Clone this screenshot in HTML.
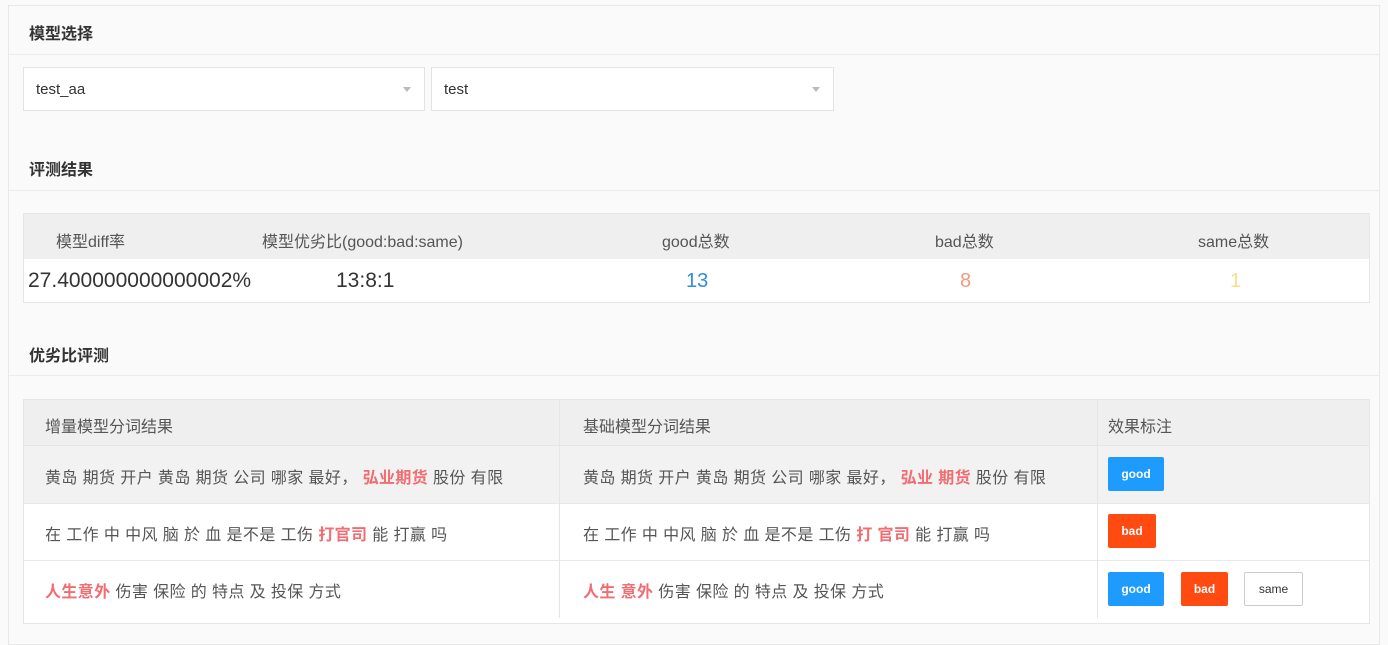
<!DOCTYPE html>
<html><head><meta charset="utf-8"><style>
*{margin:0;padding:0;box-sizing:border-box}
body{width:1388px;height:618px;background:#fafafa;font-family:"Liberation Sans","Noto Sans CJK SC",sans-serif;color:#333;position:relative;overflow:hidden}
.a{position:absolute;white-space:nowrap}
.panel{left:8px;top:5px;width:1372px;height:640px;border:1px solid #e8e8e8;background:#fafafa}
.h{font-size:16px;font-weight:bold;color:#333;left:29px}
.sep{left:9px;width:1370px;height:1px;background:#ececec}
.sel{height:44px;border:1px solid #e3e3e3;background:#fff;font-size:15px;color:#333;padding:13px 12px}
.arr{position:absolute;right:13px;top:19px;width:0;height:0;border-left:4px solid transparent;border-right:4px solid transparent;border-top:5px solid #bbb}
.t{font-size:16px;color:#555}
.rw{letter-spacing:0.4px}
.r{color:#f26d72;font-weight:bold}
.badge{height:34px;color:#fff;font-size:12px;font-weight:bold;text-align:center;line-height:34px;border-radius:2px}
</style></head><body>
<div class="a panel"></div>
<div class="a h" style="top:20px">模型选择</div>
<div class="a sep" style="top:54px"></div>
<div class="a sel" style="left:23px;top:67px;width:402px">test_aa<span class="arr"></span></div>
<div class="a sel" style="left:431px;top:67px;width:403px">test<span class="arr"></span></div>
<div class="a h" style="top:156px">评测结果</div>
<div class="a sep" style="top:190px"></div>

<div class="a" style="left:23px;top:213px;width:1347px;height:90px;border:1px solid #e6e6e6;background:#fff"></div>
<div class="a" style="left:24px;top:214px;width:1345px;height:45px;background:#efefef"></div>
<div class="a t" style="left:56px;top:228px">模型diff率</div>
<div class="a t" style="left:262px;top:228px">模型优劣比(good:bad:same)</div>
<div class="a t" style="left:662px;top:228px">good总数</div>
<div class="a t" style="left:935px;top:228px">bad总数</div>
<div class="a t" style="left:1198px;top:228px">same总数</div>
<div class="a" style="left:28px;top:269px;font-size:21px;color:#333">27.400000000000002%</div>
<div class="a" style="left:336px;top:269px;font-size:21px;color:#333">13:8:1</div>
<div class="a" style="left:686px;top:270px;font-size:20px;color:#2b8ee0">13</div>
<div class="a" style="left:960px;top:270px;font-size:20px;color:#f59a7a">8</div>
<div class="a" style="left:1230px;top:270px;font-size:20px;color:#f7e08a">1</div>

<div class="a h" style="top:342px">优劣比评测</div>
<div class="a sep" style="top:375px"></div>

<div class="a" style="left:23px;top:399px;width:1347px;height:225px;border:1px solid #e6e6e6;background:#fff"></div>
<div class="a" style="left:24px;top:400px;width:1345px;height:45px;background:#efefef"></div>
<div class="a" style="left:24px;top:445px;width:1345px;height:58px;background:#f2f2f2;border-top:1px solid #e6e6e6"></div>
<div class="a" style="left:24px;top:503px;width:1345px;height:1px;background:#e8e8e8"></div>
<div class="a" style="left:24px;top:560px;width:1345px;height:1px;background:#e8e8e8"></div>
<div class="a" style="left:559px;top:400px;width:1px;height:218px;background:#e6e6e6"></div>
<div class="a" style="left:1097px;top:400px;width:1px;height:218px;background:#e6e6e6"></div>

<div class="a t" style="left:45px;top:413px">增量模型分词结果</div>
<div class="a t" style="left:583px;top:413px">基础模型分词结果</div>
<div class="a t" style="left:1108px;top:413px">效果标注</div>

<div class="a t rw" style="left:45px;top:464px">黄岛 期货 开户 黄岛 期货 公司 哪家 最好， <span class="r">弘业期货</span> 股份 有限</div>
<div class="a t rw" style="left:583px;top:464px">黄岛 期货 开户 黄岛 期货 公司 哪家 最好， <span class="r">弘业 期货</span> 股份 有限</div>
<div class="a t rw" style="left:45px;top:521px">在 工作 中 中风 脑 於 血 是不是 工伤 <span class="r">打官司</span> 能 打赢 吗</div>
<div class="a t rw" style="left:583px;top:521px">在 工作 中 中风 脑 於 血 是不是 工伤 <span class="r">打 官司</span> 能 打赢 吗</div>
<div class="a t rw" style="left:45px;top:578px"><span class="r">人生意外</span> 伤害 保险 的 特点 及 投保 方式</div>
<div class="a t rw" style="left:583px;top:578px"><span class="r">人生 意外</span> 伤害 保险 的 特点 及 投保 方式</div>

<div class="a badge" style="left:1108px;top:457px;width:56px;background:#1e9bff">good</div>
<div class="a badge" style="left:1108px;top:514px;width:48px;background:#ff4a12">bad</div>
<div class="a badge" style="left:1108px;top:572px;width:56px;background:#1e9bff">good</div>
<div class="a badge" style="left:1181px;top:572px;width:47px;background:#ff4a12">bad</div>
<div class="a badge" style="left:1244px;top:572px;width:59px;background:#fff;border:1px solid #ccc;color:#333;font-weight:normal;line-height:32px">same</div>
</body></html>
